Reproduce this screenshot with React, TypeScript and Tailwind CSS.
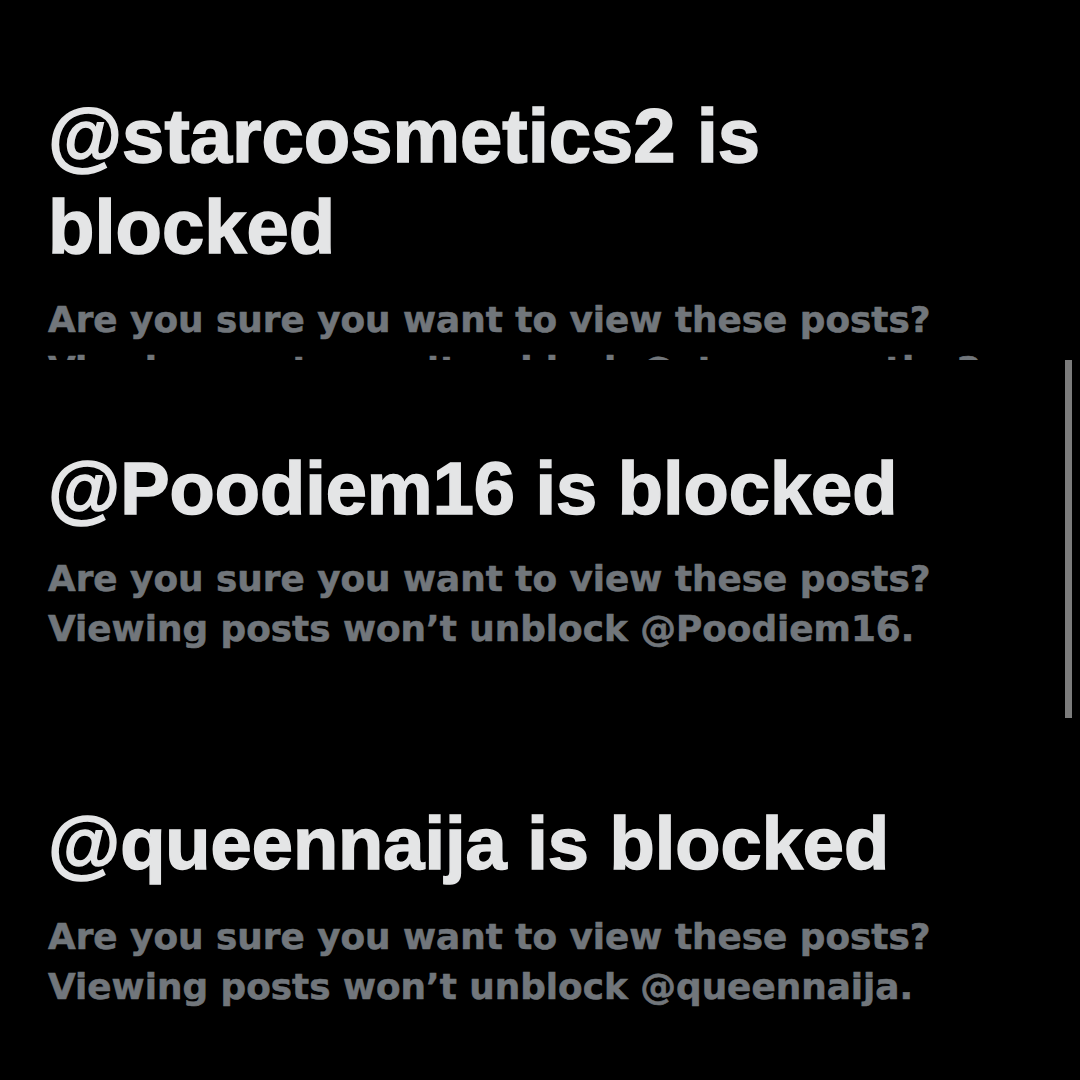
const sections = [
  {
    handle: 'starcosmetics2',
    pad: 'pt-[90px]',
    title: 'text-[76px] leading-[91px]',
    gap: 'mt-[23px]',
  },
  {
    handle: 'Poodiem16',
    pad: 'pt-[85px]',
    title: 'text-[74px] leading-[88px]',
    gap: 'mt-[21px]',
    scrollbar: true,
  },
  {
    handle: 'queennaija',
    pad: 'pt-[80px]',
    title: 'text-[74px] leading-[88px]',
    gap: 'mt-[24px]',
  },
]

export default function App() {
  return (
    <div className="w-[1080px] h-[1080px] bg-black flex flex-col overflow-hidden">
      {sections.map(s => (
        <div key={s.handle} className={`relative h-[360px] overflow-hidden px-[48px] ${s.pad}`}>
          {/* Title */}
          <h2
            className={`max-w-[900px] font-bold text-[#e4e5e6] [-webkit-text-stroke:1.5px_#e4e5e6] ${s.title}`}
            style={{ fontFamily: '"Liberation Sans", Arial, sans-serif' }}
          >
            @{s.handle} is blocked
          </h2>

          {/* Subtext */}
          <p
            className={`font-bold text-[35.8px] leading-[50px] text-[#71767b] [-webkit-text-stroke:0.6px_#71767b] ${s.gap}`}
            style={{ fontFamily: '"DejaVu Sans", sans-serif' }}
          >
            Are you sure you want to view these posts?
            <br />
            Viewing posts won’t unblock @{s.handle}.
          </p>

          {s.scrollbar && (
            <div className="absolute right-[8px] top-0 bottom-[2px] w-[7px] bg-[#7c7c7c]" />
          )}
        </div>
      ))}
    </div>
  )
}
